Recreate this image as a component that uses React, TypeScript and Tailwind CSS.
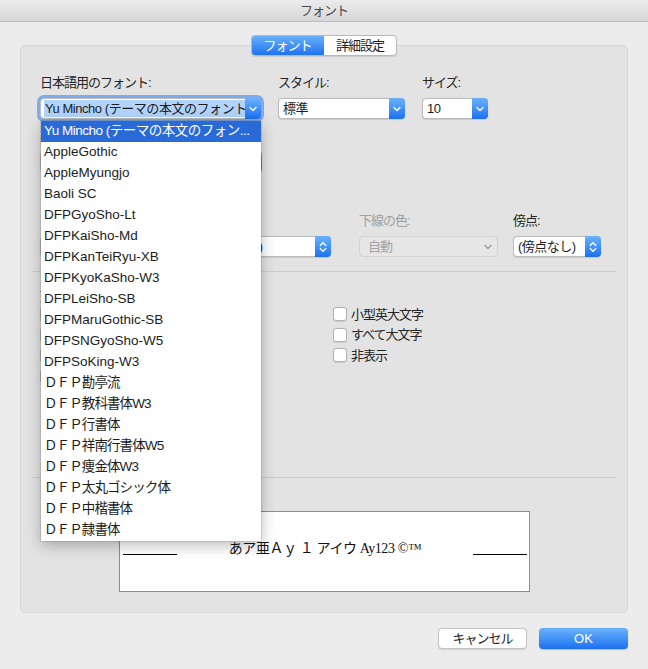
import React from 'react';

const FONT = "font-['Liberation_Sans','Noto_Sans_CJK_JP',sans-serif]";

// Japanese glyphs here run a bit tighter than Noto's full-width advance
const jp = 'tracking-[-1px]';

const Chevron: React.FC<{ kind: 'down' | 'updown'; gray?: boolean }> = ({ kind, gray }) => {
  const color = gray ? '#9a9a9a' : '#ffffff';
  if (kind === 'down') {
    return (
      <svg width="8" height="6" viewBox="0 0 8 6" fill="none">
        <path d="M1 1.5 L4 4.5 L7 1.5" stroke={color} strokeWidth="1.4" strokeLinecap="round" strokeLinejoin="round" />
      </svg>
    );
  }
  return (
    <svg width="8" height="12" viewBox="0 0 8 12" fill="none">
      <path d="M1.2 4.5 L4 1.7 L6.8 4.5" stroke={color} strokeWidth="1.3" strokeLinecap="round" strokeLinejoin="round" />
      <path d="M1.2 7.5 L4 10.3 L6.8 7.5" stroke={color} strokeWidth="1.3" strokeLinecap="round" strokeLinejoin="round" />
    </svg>
  );
};

interface SelectProps {
  value: string;
  className: string;
  kind?: 'down' | 'updown';
  disabled?: boolean;
  focused?: boolean;
}

const Select: React.FC<SelectProps> = ({ value, className, kind = 'down', disabled, focused }) => {
  if (disabled) {
    return (
      <div className={`${className} h-[21px] flex items-center rounded-[4px] border border-[#d3d3d3] bg-[#e6e6e6]`}>
        <span className={`flex-1 pl-[8px] text-[13px] text-[#a3a3a3] leading-none ${jp}`}>{value}</span>
        <span className="w-[18px] flex items-center justify-center">
          <Chevron kind="down" gray />
        </span>
      </div>
    );
  }
  return (
    <div
      className={`${className} h-[21px] flex items-stretch rounded-[4px] bg-white border border-[#bcbcbc] shadow-[0_0.5px_1px_rgba(0,0,0,0.12)] ${
        focused ? 'shadow-[0_0_0_3px_rgba(92,152,238,0.75)] border-[#8fb6ec]' : ''
      }`}
    >
      <span className="flex-1 min-w-0 flex items-center pl-[3px] overflow-hidden whitespace-nowrap">
        <span
          className={`text-[13px] text-[#1e1e1e] leading-[17px] px-[1px] ${
            focused ? 'bg-[#b2d3fb] tracking-[-0.45px]' : 'tracking-[-0.5px]'
          }`}
        >
          {value}
        </span>
      </span>
      <span className="w-[16px] -my-px -mr-px rounded-r-[4px] flex items-center justify-center bg-linear-to-b from-[#6bb2fa] to-[#1a6ff1]">
        <Chevron kind={kind} />
      </span>
    </div>
  );
};

const Checkbox: React.FC<{ label: string }> = ({ label }) => (
  <div className="h-[20.5px] flex items-center gap-[4px]">
    <span className="w-[14px] h-[14px] rounded-[3px] border border-[#b2b2b2] bg-white shadow-[0_0.5px_1px_rgba(0,0,0,0.1)]" />
    <span className={`text-[13px] text-[#262626] ${jp}`}>{label}</span>
  </div>
);

const Label: React.FC<{ children: React.ReactNode; muted?: boolean }> = ({ children, muted }) => (
  <div className={`text-[13px] leading-[16px] ${jp} ${muted ? 'text-[#a0a0a0]' : 'text-[#262626]'}`}>{children}</div>
);

const fontList = [
  'AppleGothic',
  'AppleMyungjo',
  'Baoli SC',
  'DFPGyoSho-Lt',
  'DFPKaiSho-Md',
  'DFPKanTeiRyu-XB',
  'DFPKyoKaSho-W3',
  'DFPLeiSho-SB',
  'DFPMaruGothic-SB',
  'DFPSNGyoSho-W5',
  'DFPSoKing-W3',
  'ＤＦＰ勘亭流',
  'ＤＦＰ教科書体W3',
  'ＤＦＰ行書体',
  'ＤＦＰ祥南行書体W5',
  'ＤＦＰ痩金体W3',
  'ＤＦＰ太丸ゴシック体',
  'ＤＦＰ中楷書体',
  'ＤＦＰ隷書体',
];

const isJapanese = (s: string) => /[\u3000-\u9fff\uff00-\uffef]/.test(s);

export default function App() {
  return (
    <div className={`${FONT} relative w-[648px] h-[669px] overflow-hidden bg-[#ececec] text-[#262626]`}>
      {/* Title bar */}
      <div className="h-[22px] flex items-center justify-center bg-linear-to-b from-[#ececec] to-[#d6d6d6] border-b border-[#bdbdbd]">
        <span className={`text-[13px] text-[#4a4a4a] ${jp}`}>フォント</span>
      </div>

      {/* Group panel */}
      <div className="mx-[20px] mt-[23px] h-[568px] rounded-[5px] border border-[#d7d7d7] bg-[#e3e3e3]">
        {/* Tabs */}
        <div className="-mt-[11px] flex justify-center">
          <div className="flex h-[21px] rounded-[4px] border border-[#b9b9b9] bg-white shadow-[0_0.5px_1px_rgba(0,0,0,0.1)] overflow-hidden">
            <div className={`w-[73px] -my-px -ml-px flex items-center justify-center bg-linear-to-b from-[#6bb2fa] to-[#1a6ff1] text-white text-[13px] ${jp}`}>
              フォント
            </div>
            <div className={`w-[72px] flex items-center justify-center text-[13px] text-[#1e1e1e] ${jp}`}>詳細設定</div>
          </div>
        </div>

        {/* Row 1 */}
        <div className="px-[19px] mt-[19px] flex">
          <div className="w-[221px]">
            <Label>日本語用のフォント:</Label>
            <Select className="mt-[7px] w-[221px]" value="Yu Mincho (テーマの本文のフォント)" focused />
          </div>
          <div className="ml-[17px] w-[127px]">
            <Label>スタイル:</Label>
            <Select className="mt-[7px] w-[127px]" value="標準" />
          </div>
          <div className="ml-[17px] w-[66px]">
            <Label>サイズ:</Label>
            <Select className="mt-[7px] w-[66px]" value="10" />
          </div>
        </div>

        {/* Row 2 */}
        <div className="px-[19px] mt-[10px]">
          <Label>英数字用のフォント:</Label>
          <Select className="mt-[6px] w-[222px]" value="(日本語用と同じフォント)" />
        </div>

        {/* Row 3 */}
        <div className="px-[19px] mt-[41px] flex">
          <div className="w-[145px]">
            <Label>フォントの色:</Label>
            <Select className="mt-[7px] w-[145px]" value="自動" />
          </div>
          <div className="ml-[15px] w-[131px]">
            <Label>下線:</Label>
            <Select className="mt-[7px] w-[131px]" value="(下線なし)" kind="updown" />
          </div>
          <div className="ml-[28px] w-[139px]">
            <Label muted>下線の色:</Label>
            <Select className="mt-[7px] w-[139px]" value="自動" disabled />
          </div>
          <div className="ml-[15px] w-[88px]">
            <Label>傍点:</Label>
            <Select className="mt-[7px] w-[88px]" value="(傍点なし)" kind="updown" />
          </div>
        </div>

        <div className="mx-[11px] mt-[14px] h-px bg-[#cdcdcd]" />

        {/* Effects */}
        <div className="px-[19px] mt-[16px]">
          <Label>文字飾り</Label>
          <div className="flex">
            <div className="w-[293px]">
              <Checkbox label="取り消し線" />
              <Checkbox label="二重取り消し線" />
              <Checkbox label="上付き" />
              <Checkbox label="下付き" />
            </div>
            <div>
              <Checkbox label="小型英大文字" />
              <Checkbox label="すべて大文字" />
              <Checkbox label="非表示" />
            </div>
          </div>
        </div>

        <div className="mx-[11px] mt-[91px] h-px bg-[#cdcdcd]" />

        {/* Preview */}
        <div className="px-[19px] mt-[6px]">
          <Label>プレビュー</Label>
        </div>
        <div className="ml-[98px] mt-[11px] w-[411px] h-[81px] border border-[#8e8e8e] bg-white flex items-center">
          <div className="ml-[3px] w-[54px] h-px bg-black mt-[6px]" />
          <div className="flex-1 text-center font-['Liberation_Serif','Noto_Sans_CJK_JP',serif] text-[14px] text-[#111] tracking-[-0.4px] -mt-[6px]">
            あア亜Ａｙ １ アイウ Ay123 ©™
          </div>
          <div className="mr-[2px] w-[54px] h-px bg-black mt-[6px]" />
        </div>
      </div>

      {/* Buttons */}
      <div className="mt-[15px] pr-[20px] flex justify-end gap-[12px]">
        <button className={`w-[89px] h-[21px] rounded-[4px] border border-[#c4c4c4] bg-white text-[13px] text-[#1e1e1e] shadow-[0_0.5px_1px_rgba(0,0,0,0.12)] ${jp}`}>
          キャンセル
        </button>
        <button className="w-[89px] h-[21px] rounded-[4px] bg-linear-to-b from-[#6bb2fa] to-[#1a6ff1] text-[13px] text-white shadow-[0_0.5px_1px_rgba(0,0,0,0.2)]">
          OK
        </button>
      </div>

      {/* Open font popup */}
      <div className="absolute left-[41px] top-[121px] w-[220px] bg-white shadow-[0_4px_14px_rgba(0,0,0,0.28),0_0_0_0.5px_rgba(0,0,0,0.18)]">
        <div className="h-[21px] flex items-center pl-[3px] pr-[6px] bg-[#2a6ad8] text-white text-[13.5px] tracking-[-0.5px] whitespace-nowrap overflow-hidden">
          Yu Mincho (テーマの本文のフォン...
        </div>
        {fontList.map((f) => (
          <div
            key={f}
            className={`h-[21px] flex items-center pl-[3px] text-[13.5px] text-[#1c1c1c] whitespace-nowrap ${
              isJapanese(f) ? 'tracking-[-0.9px]' : ''
            }`}
          >
            {f}
          </div>
        ))}
      </div>
    </div>
  );
}
